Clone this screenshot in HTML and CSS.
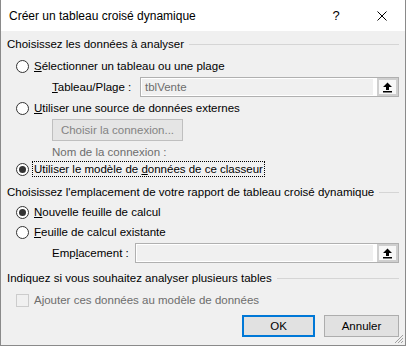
FILE: index.html
```html
<!DOCTYPE html>
<html lang="fr">
<head>
<meta charset="utf-8">
<title>Créer un tableau croisé dynamique</title>
<link rel="stylesheet" href="styles.css">
</head>
<body>
<div class="window">
  <div class="titlebar">
    <span class="title">Créer un tableau croisé dynamique</span>
    <span class="tbtn help">?</span>
    <span class="tbtn close">
      <svg width="10" height="10" viewBox="0 0 10 10"><path d="M0.5 0.5 L9.5 9.5 M9.5 0.5 L0.5 9.5" stroke="#000" stroke-width="1" fill="none"/></svg>
    </span>
  </div>
  <div class="content">
    <div class="group-head g1"><span class="gtext">Choisissez les données à analyser</span><span class="rule"></span></div>

    <div class="row radio-row r1"><span class="radio"></span><span class="lbl"><u>S</u>électionner un tableau ou une plage</span></div>

    <div class="row field-row f1">
      <span class="flabel"><u>T</u>ableau/Plage :</span>
      <div class="input">
        <span class="field disabled">tblVente</span>
        <span class="pick"><span class="pick-inner"><svg width="11" height="11" viewBox="0 0 11 11"><path d="M5.5 0.5 L10 5 L7 5 L7 8 L4 8 L4 5 L1 5 Z" fill="#000"/><rect x="1" y="9" width="9" height="1.5" fill="#000"/></svg></span></span>
      </div>
    </div>

    <div class="row radio-row r2"><span class="radio"></span><span class="lbl"><u>U</u>tiliser une source de données externes</span></div>

    <div class="row btn-row"><span class="button disabled-btn">Choisir la connexion...</span></div>

    <div class="row note-row"><span class="note">Nom de la connexion :</span></div>

    <div class="row radio-row r3"><span class="radio checked"></span><span class="lbl focus">Utiliser le modèle de <u>d</u>onnées de ce classeur</span></div>

    <div class="group-head g2"><span class="gtext">Choisissez l'emplacement de votre rapport de tableau croisé dynamique</span><span class="rule"></span></div>

    <div class="row radio-row r4"><span class="radio checked"></span><span class="lbl"><u>N</u>ouvelle feuille de calcul</span></div>

    <div class="row radio-row r5"><span class="radio"></span><span class="lbl"><u>F</u>euille de calcul existante</span></div>

    <div class="row field-row f2">
      <span class="flabel">Emp<u>l</u>acement :</span>
      <div class="input">
        <span class="field"></span>
        <span class="pick"><span class="pick-inner"><svg width="11" height="11" viewBox="0 0 11 11"><path d="M5.5 0.5 L10 5 L7 5 L7 8 L4 8 L4 5 L1 5 Z" fill="#000"/><rect x="1" y="9" width="9" height="1.5" fill="#000"/></svg></span></span>
      </div>
    </div>

    <div class="group-head g3"><span class="gtext">Indiquez si vous souhaitez analyser plusieurs tables</span><span class="rule"></span></div>

    <div class="row check-row"><span class="checkbox"></span><span class="lbl gray">Ajouter ces données au modèle de données</span></div>

    <div class="row actions">
      <span class="button default">OK</span>
      <span class="button">Annuler</span>
    </div>
  </div>
  <svg class="grip" width="10" height="10" viewBox="0 0 10 10">
    <path d="M9 1 L1 9 M9 4 L4 9 M9 7 L7 9" stroke="#a0a0a0" stroke-width="1" fill="none"/>
  </svg>
</div>
</body>
</html>
```

FILE: styles.css
```css
* { box-sizing: border-box; }
html, body { margin: 0; padding: 0; background: #f0f0f0; }
body {
  font-family: "Liberation Sans", Arial, sans-serif;
  font-size: 11.5px;
  color: #000;
}
.window {
  position: relative;
  width: 406px;
  height: 346px;
  border: 1px solid #8a8a8a;
  border-top: none;
  background: #f0f0f0;
  display: flex;
  flex-direction: column;
}
.titlebar {
  height: 31px;
  background: #fff;
  display: flex;
  align-items: center;
  padding-left: 8px;
  flex: none;
}
.title { flex: 1; font-size: 12px; white-space: nowrap; }
.tbtn {
  width: 46px;
  height: 31px;
  display: flex;
  align-items: center;
  justify-content: center;
}
.help { font-size: 13px; }
.content {
  padding: 0 6px 0 6px;
  display: flex;
  flex-direction: column;
}
.row { display: flex; align-items: center; flex: none; white-space: nowrap; }
.group-head {
  display: flex;
  align-items: center;
  height: 16px;
  line-height: 16px;
  white-space: nowrap;
}
.rule { flex: 1; height: 1px; background: #d5d5d5; margin-left: 5px; }
.g1 { margin-top: 5px; }
.g2 { margin-top: 7px; }
.g3 { margin-top: 7px; }

.radio-row { height: 16px; padding-left: 9px; }
.r1 { margin-top: 6px; }
.r2 { margin-top: 3px; }
.r3 { margin-top: 1px; }
.r4 { margin-top: 4px; }
.r5 { margin-top: 4px; }
.radio {
  width: 13px; height: 13px;
  border: 1px solid #333;
  border-radius: 50%;
  background: #fff;
  position: relative;
  flex: none;
}
.radio.checked::after {
  content: "";
  position: absolute;
  left: 2px; top: 2px;
  width: 7px; height: 7px;
  border-radius: 50%;
  background: #333;
}
.lbl { margin-left: 3px; padding: 0 1px; line-height: 14px; border: 1px solid transparent; }
.lbl.focus { border: 1px dotted #000; }
.gray { color: #6d6d6d; }

.field-row { height: 20px; margin-top: 3px; padding-left: 45px; }
.flabel { width: 88px; flex: none; }
.f2 .flabel { width: 83px; }
.input {
  flex: 1;
  height: 20px;
  border: 1px solid #b0b0b0;
  background: #fff;
  padding: 1px;
  display: flex;
}
.field {
  flex: 1;
  background: #f0f0f0;
  color: #6d6d6d;
  padding-left: 3px;
  line-height: 16px;
  margin-right: 4px;
}
.pick {
  width: 21px;
  margin: -1px -1px -1px 0;
  background: #cfcfcf;
  padding: 2px;
  display: flex;
}
.pick-inner {
  flex: 1;
  background: #f7f7f7;
  display: flex;
  align-items: center;
  justify-content: center;
}

.btn-row { margin-top: 3px; padding-left: 45px; }
.button {
  height: 22px;
  border: 1px solid #adadad;
  background: #e1e1e1;
  display: flex;
  align-items: center;
  justify-content: center;
}
.disabled-btn { width: 131px; color: #838383; background: #e5e5e5; border-color: #bfbfbf; }
.note-row { height: 16px; margin-top: 3px; padding-left: 45px; }
.note { color: #6d6d6d; }

.check-row { height: 16px; margin-top: 6px; padding-left: 9px; }
.checkbox {
  width: 13px; height: 13px;
  border: 1px solid #cccccc;
  background: #f0f0f0;
  flex: none;
}
.check-row .lbl { margin-left: 3px; }

.actions { margin-top: 7px; justify-content: flex-end; gap: 9px; }
.actions .button { width: 73px; }
.actions .button + .button { width: 75px; }
.button.default { border: 2px solid #0078d7; }

.grip { position: absolute; right: 1px; bottom: 1px; }
```
